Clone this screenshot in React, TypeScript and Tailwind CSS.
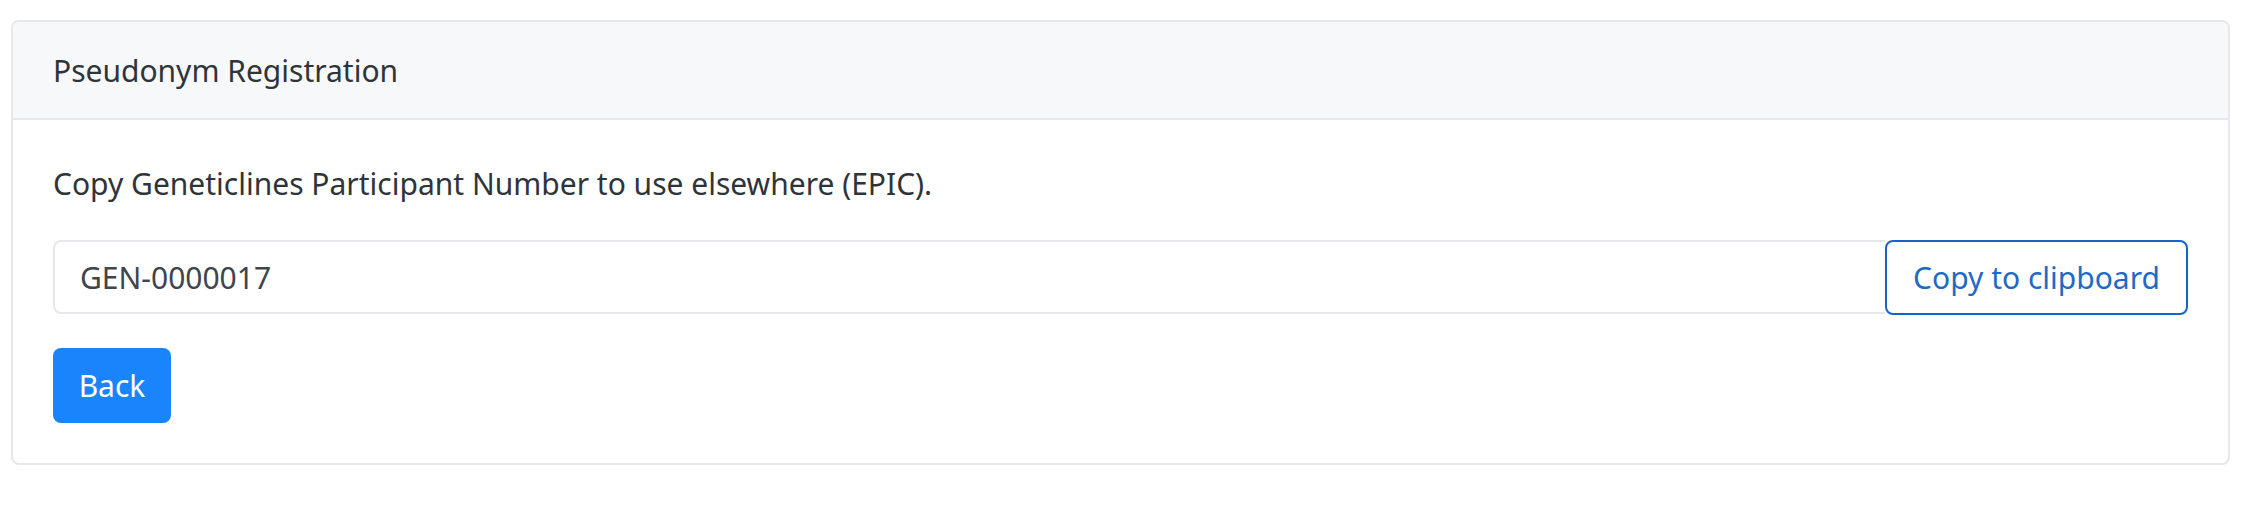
import React from "react";

export default function App() {
  const font = { fontFamily: '"Noto Sans", "Open Sans", sans-serif' };
  return (
    <div className="min-h-[524px] bg-white pt-[20px] pl-[11px]" style={font}>
      <div className="w-[2219px] rounded-[8px] border-2 border-[#e6e8ec] overflow-hidden">
        <div className="flex h-[98px] items-center border-b-2 border-[#e6e8ec] bg-[#f7f8fa] px-[40px] text-[30px] text-[#2f3439]">
          Pseudonym Registration
        </div>
        <div className="p-[40px]">
          <p className="mb-[32px] h-[48px] text-[30px] leading-[48px] text-[#2f3439]">
            Copy Geneticlines Participant Number to use elsewhere (EPIC).
          </p>
          <div className="flex items-stretch">
            <div className="flex h-[74px] flex-1 items-center rounded-l-[8px] border-2 border-r-0 border-[#e6e8ec] px-[25px] text-[30px] text-[#3f454b]">
              GEN-0000017
            </div>
            <button className="flex h-[75px] w-[303px] items-center justify-center rounded-[8px] border-2 border-[#1664c4] bg-white text-[30px] text-[#1f6ac6]">
              Copy to clipboard
            </button>
          </div>
          <button className="mt-[33px] flex h-[75px] w-[118px] items-center justify-center rounded-[8px] bg-[#1a84fc] text-[30px] text-white">
            Back
          </button>
        </div>
      </div>
    </div>
  );
}
